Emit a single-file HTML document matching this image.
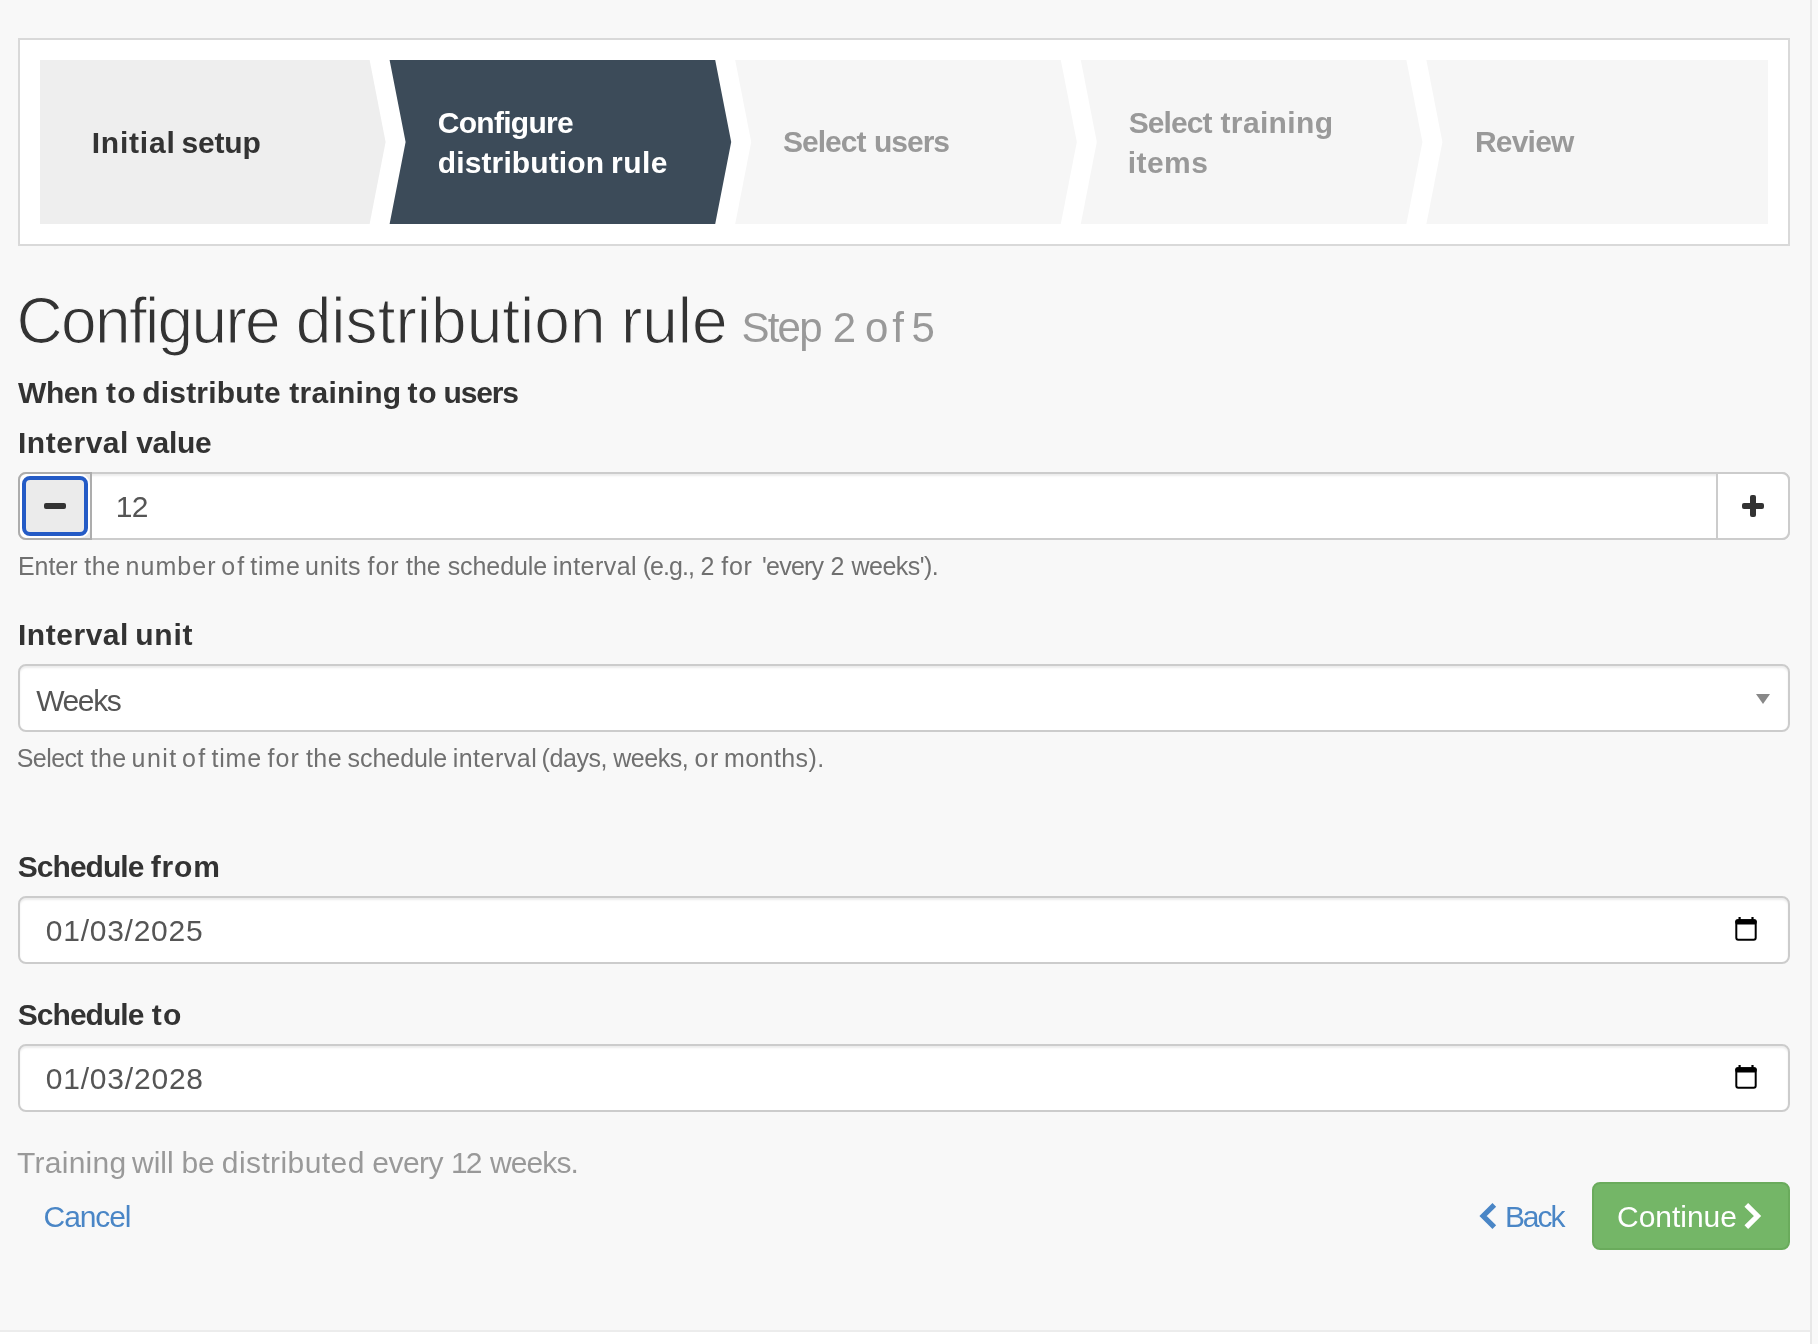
<!DOCTYPE html>
<html><head><meta charset="utf-8"><title>Configure distribution rule</title>
<style>
html,body{margin:0;padding:0}
body{width:1818px;height:1344px;position:relative;overflow:hidden;background:#f8f8f8;font-family:"Liberation Sans",sans-serif}
.t{position:absolute;white-space:nowrap}
</style></head><body>
<div style="position:absolute;left:1810px;top:0;width:2px;height:1344px;background:#e8e8e8"></div>
<div style="position:absolute;left:1812px;top:0;width:6px;height:1344px;background:#f9f9f9"></div>
<div style="position:absolute;left:0;top:1330px;width:1810px;height:2px;background:#ececec"></div>
<div style="position:absolute;left:0;top:1332px;width:1810px;height:12px;background:#fff"></div>
<div style="position:absolute;left:18px;top:38px;width:1772px;height:208px;box-sizing:border-box;border:2px solid #d9d9d9;background:#fff"></div>
<svg style="position:absolute;left:0;top:0" width="1818" height="260" viewBox="0 0 1818 260"><polygon points="40.0,60 369.6,60 385.6,142 369.6,224 40.0,224" fill="#eeeeee"/><polygon points="389.6,60 715.2,60 731.2,142 715.2,224 389.6,224 405.6,142" fill="#3c4b59"/><polygon points="735.2,60 1060.8,60 1076.8,142 1060.8,224 735.2,224 751.2,142" fill="#f6f6f6"/><polygon points="1080.8,60 1406.4,60 1422.4,142 1406.4,224 1080.8,224 1096.8,142" fill="#f6f6f6"/><polygon points="1426.4,60 1768.0,60 1768.0,224 1426.4,224 1442.4,142" fill="#f6f6f6"/></svg>
<div style="position:absolute;left:18px;width:1772px;height:68px;box-sizing:border-box;border:2px solid #cccccc;border-radius:8px;background:#fff;box-shadow:inset 0 2px 2px rgba(0,0,0,.075);top:472px"></div>
<div style="position:absolute;left:18px;top:472px;width:74px;height:68px;box-sizing:border-box;border:2px solid #adadad;border-radius:8px 0 0 8px;background:#fff"></div>
<div style="position:absolute;left:20px;top:474px;width:70px;height:64px;background:#e9e9e9;border-radius:12px 0 0 12px"></div>
<div style="position:absolute;left:22px;top:476px;width:66px;height:60px;box-sizing:border-box;border:4px solid #245bc6;border-radius:8px;background:#ebebeb;box-shadow:0 0 0 2px #fff"></div>
<div style="position:absolute;left:44px;top:503px;width:22px;height:6px;border-radius:2px;background:#333"></div>
<div style="position:absolute;left:1716px;top:472px;width:74px;height:68px;box-sizing:border-box;border:2px solid #cccccc;border-radius:0 8px 8px 0;background:#fff"></div>
<div style="position:absolute;left:1742px;top:503px;width:22px;height:6px;border-radius:2px;background:#333"></div>
<div style="position:absolute;left:1750px;top:495px;width:6px;height:22px;border-radius:2px;background:#333"></div>
<div style="position:absolute;left:18px;width:1772px;height:68px;box-sizing:border-box;border:2px solid #cccccc;border-radius:8px;background:#fff;box-shadow:inset 0 2px 2px rgba(0,0,0,.075);top:664px"></div>
<svg style="position:absolute;left:1750px;top:690px" width="26" height="20"><polygon points="6,4 20,4 13,14" fill="#888"/></svg>
<div style="position:absolute;left:18px;width:1772px;height:68px;box-sizing:border-box;border:2px solid #cccccc;border-radius:8px;background:#fff;box-shadow:inset 0 2px 2px rgba(0,0,0,.075);top:896px"></div>
<svg style="position:absolute;left:1733px;top:914px" width="26" height="30" viewBox="0 0 26 30"><rect x="3.3" y="6.2" width="19.4" height="19.5" rx="2" fill="none" stroke="#000" stroke-width="2"/><rect x="2.3" y="5.2" width="21.4" height="5.3" rx="2" fill="#000"/><rect x="5.5" y="3" width="2.2" height="3" fill="#000"/><rect x="18.4" y="3" width="2.2" height="3" fill="#000"/></svg>
<div style="position:absolute;left:18px;width:1772px;height:68px;box-sizing:border-box;border:2px solid #cccccc;border-radius:8px;background:#fff;box-shadow:inset 0 2px 2px rgba(0,0,0,.075);top:1044px"></div>
<svg style="position:absolute;left:1733px;top:1062px" width="26" height="30" viewBox="0 0 26 30"><rect x="3.3" y="6.2" width="19.4" height="19.5" rx="2" fill="none" stroke="#000" stroke-width="2"/><rect x="2.3" y="5.2" width="21.4" height="5.3" rx="2" fill="#000"/><rect x="5.5" y="3" width="2.2" height="3" fill="#000"/><rect x="18.4" y="3" width="2.2" height="3" fill="#000"/></svg>
<svg style="position:absolute;left:1476px;top:1200px" width="24" height="32" viewBox="0 0 24 32"><polyline points="18.3,4.8 7.1,16 18.3,27.2" fill="none" stroke="#4a86c6" stroke-width="5.2"/></svg>
<div style="position:absolute;left:1592px;top:1182px;width:198px;height:68px;box-sizing:border-box;border:2px solid #6aab5c;border-radius:8px;background:#74b667"></div>
<svg style="position:absolute;left:1740px;top:1200px" width="24" height="32" viewBox="0 0 24 32"><polyline points="6.3,4.8 17.5,16 6.3,27.2" fill="none" stroke="#fff" stroke-width="5.2"/></svg>
<div style="position:absolute;left:0;top:0;width:1818px;height:1344px;will-change:transform">
<div class="t" style="left:91.75px;top:128.10px;font-size:30px;line-height:30px;font-weight:700;color:#333;letter-spacing:0.775px;">Initial</div>
<div class="t" style="left:181.60px;top:128.10px;font-size:30px;line-height:30px;font-weight:700;color:#333;letter-spacing:-0.212px;">setup</div>
<div class="t" style="left:437.80px;top:107.80px;font-size:30px;line-height:30px;font-weight:700;color:#fff;letter-spacing:-0.725px;">Configure</div>
<div class="t" style="left:437.80px;top:147.60px;font-size:30px;line-height:30px;font-weight:700;color:#fff;letter-spacing:0.118px;">distribution</div>
<div class="t" style="left:611.00px;top:147.60px;font-size:30px;line-height:30px;font-weight:700;color:#fff;letter-spacing:0.500px;">rule</div>
<div class="t" style="left:783.00px;top:127.30px;font-size:30px;line-height:30px;font-weight:700;color:#999;letter-spacing:-0.980px;">Select</div>
<div class="t" style="left:873.90px;top:127.30px;font-size:30px;line-height:30px;font-weight:700;color:#999;letter-spacing:-0.975px;">users</div>
<div class="t" style="left:1128.70px;top:107.50px;font-size:30px;line-height:30px;font-weight:700;color:#999;letter-spacing:-0.920px;">Select</div>
<div class="t" style="left:1220.50px;top:107.50px;font-size:30px;line-height:30px;font-weight:700;color:#999;letter-spacing:0.357px;">training</div>
<div class="t" style="left:1127.70px;top:147.60px;font-size:30px;line-height:30px;font-weight:700;color:#999;letter-spacing:0.475px;">items</div>
<div class="t" style="left:1474.90px;top:127.30px;font-size:30px;line-height:30px;font-weight:700;color:#999;letter-spacing:-0.780px;">Review</div>
<div class="t" style="left:16.50px;top:289.02px;font-size:64px;line-height:64px;font-weight:400;color:#333;letter-spacing:-1.663px;-webkit-text-stroke:1.2px #f8f8f8;">Configure</div>
<div class="t" style="left:295.75px;top:289.02px;font-size:64px;line-height:64px;font-weight:400;color:#333;letter-spacing:0.023px;-webkit-text-stroke:1.2px #f8f8f8;">distribution</div>
<div class="t" style="left:621.00px;top:289.02px;font-size:64px;line-height:64px;font-weight:400;color:#333;letter-spacing:-0.083px;-webkit-text-stroke:1.2px #f8f8f8;">rule</div>
<div class="t" style="left:741.50px;top:306.65px;font-size:42px;line-height:42px;font-weight:400;color:#999;letter-spacing:-1.800px;">Step</div>
<div class="t" style="left:832.85px;top:306.65px;font-size:42px;line-height:42px;font-weight:400;color:#999;letter-spacing:0.000px;">2</div>
<div class="t" style="left:865.00px;top:306.65px;font-size:42px;line-height:42px;font-weight:400;color:#999;letter-spacing:3.800px;">of</div>
<div class="t" style="left:911.55px;top:306.65px;font-size:42px;line-height:42px;font-weight:400;color:#999;letter-spacing:0.000px;">5</div>
<div class="t" style="left:18.10px;top:377.71px;font-size:30px;line-height:30px;font-weight:700;color:#333;letter-spacing:-0.433px;">When</div>
<div class="t" style="left:106.10px;top:377.71px;font-size:30px;line-height:30px;font-weight:700;color:#333;letter-spacing:1.100px;">to</div>
<div class="t" style="left:142.30px;top:377.71px;font-size:30px;line-height:30px;font-weight:700;color:#333;letter-spacing:0.178px;">distribute</div>
<div class="t" style="left:289.30px;top:377.71px;font-size:30px;line-height:30px;font-weight:700;color:#333;letter-spacing:0.257px;">training</div>
<div class="t" style="left:407.60px;top:377.71px;font-size:30px;line-height:30px;font-weight:700;color:#333;letter-spacing:0.600px;">to</div>
<div class="t" style="left:443.60px;top:377.71px;font-size:30px;line-height:30px;font-weight:700;color:#333;letter-spacing:-1.150px;">users</div>
<div class="t" style="left:18.00px;top:427.71px;font-size:30px;line-height:30px;font-weight:700;color:#333;letter-spacing:0.529px;">Interval</div>
<div class="t" style="left:136.20px;top:427.71px;font-size:30px;line-height:30px;font-weight:700;color:#333;letter-spacing:-0.300px;">value</div>
<div class="t" style="left:115.70px;top:492.21px;font-size:30px;line-height:30px;font-weight:400;color:#555;letter-spacing:-0.700px;">12</div>
<div class="t" style="left:18.00px;top:553.84px;font-size:25px;line-height:25px;font-weight:400;color:#707070;letter-spacing:-0.050px;">Enter</div>
<div class="t" style="left:84.30px;top:553.84px;font-size:25px;line-height:25px;font-weight:400;color:#707070;letter-spacing:0.550px;">the</div>
<div class="t" style="left:125.60px;top:553.84px;font-size:25px;line-height:25px;font-weight:400;color:#707070;letter-spacing:1.020px;">number</div>
<div class="t" style="left:221.20px;top:553.84px;font-size:25px;line-height:25px;font-weight:400;color:#707070;letter-spacing:2.100px;">of</div>
<div class="t" style="left:250.20px;top:553.84px;font-size:25px;line-height:25px;font-weight:400;color:#707070;letter-spacing:0.800px;">time</div>
<div class="t" style="left:305.10px;top:553.84px;font-size:25px;line-height:25px;font-weight:400;color:#707070;letter-spacing:0.675px;">units</div>
<div class="t" style="left:367.60px;top:553.84px;font-size:25px;line-height:25px;font-weight:400;color:#707070;letter-spacing:0.950px;">for</div>
<div class="t" style="left:406.00px;top:553.84px;font-size:25px;line-height:25px;font-weight:400;color:#707070;letter-spacing:0.000px;">the</div>
<div class="t" style="left:447.70px;top:553.84px;font-size:25px;line-height:25px;font-weight:400;color:#707070;letter-spacing:-0.086px;">schedule</div>
<div class="t" style="left:552.80px;top:553.84px;font-size:25px;line-height:25px;font-weight:400;color:#707070;letter-spacing:0.457px;">interval</div>
<div class="t" style="left:642.70px;top:553.84px;font-size:25px;line-height:25px;font-weight:400;color:#707070;letter-spacing:-0.920px;">(e.g.,</div>
<div class="t" style="left:700.60px;top:553.84px;font-size:25px;line-height:25px;font-weight:400;color:#707070;letter-spacing:0.000px;">2</div>
<div class="t" style="left:721.20px;top:553.84px;font-size:25px;line-height:25px;font-weight:400;color:#707070;letter-spacing:0.750px;">for</div>
<div class="t" style="left:762.00px;top:553.84px;font-size:25px;line-height:25px;font-weight:400;color:#707070;letter-spacing:-0.760px;">'every</div>
<div class="t" style="left:830.45px;top:553.84px;font-size:25px;line-height:25px;font-weight:400;color:#707070;letter-spacing:0.000px;">2</div>
<div class="t" style="left:851.50px;top:553.84px;font-size:25px;line-height:25px;font-weight:400;color:#707070;letter-spacing:-0.514px;">weeks').</div>
<div class="t" style="left:18.00px;top:619.61px;font-size:30px;line-height:30px;font-weight:700;color:#333;letter-spacing:0.529px;">Interval</div>
<div class="t" style="left:135.30px;top:619.61px;font-size:30px;line-height:30px;font-weight:700;color:#333;letter-spacing:0.733px;">unit</div>
<div class="t" style="left:36.20px;top:685.61px;font-size:30px;line-height:30px;font-weight:400;color:#555;letter-spacing:-1.400px;">Weeks</div>
<div class="t" style="left:16.75px;top:745.74px;font-size:25px;line-height:25px;font-weight:400;color:#707070;letter-spacing:-0.550px;">Select</div>
<div class="t" style="left:90.50px;top:745.74px;font-size:25px;line-height:25px;font-weight:400;color:#707070;letter-spacing:0.500px;">the</div>
<div class="t" style="left:131.60px;top:745.74px;font-size:25px;line-height:25px;font-weight:400;color:#707070;letter-spacing:1.467px;">unit</div>
<div class="t" style="left:181.90px;top:745.74px;font-size:25px;line-height:25px;font-weight:400;color:#707070;letter-spacing:2.500px;">of</div>
<div class="t" style="left:211.50px;top:745.74px;font-size:25px;line-height:25px;font-weight:400;color:#707070;letter-spacing:0.800px;">time</div>
<div class="t" style="left:267.40px;top:745.74px;font-size:25px;line-height:25px;font-weight:400;color:#707070;letter-spacing:1.100px;">for</div>
<div class="t" style="left:305.90px;top:745.74px;font-size:25px;line-height:25px;font-weight:400;color:#707070;letter-spacing:0.450px;">the</div>
<div class="t" style="left:347.60px;top:745.74px;font-size:25px;line-height:25px;font-weight:400;color:#707070;letter-spacing:-0.057px;">schedule</div>
<div class="t" style="left:452.70px;top:745.74px;font-size:25px;line-height:25px;font-weight:400;color:#707070;letter-spacing:0.486px;">interval</div>
<div class="t" style="left:541.60px;top:745.74px;font-size:25px;line-height:25px;font-weight:400;color:#707070;letter-spacing:-0.440px;">(days,</div>
<div class="t" style="left:613.30px;top:745.74px;font-size:25px;line-height:25px;font-weight:400;color:#707070;letter-spacing:-0.500px;">weeks,</div>
<div class="t" style="left:694.50px;top:745.74px;font-size:25px;line-height:25px;font-weight:400;color:#707070;letter-spacing:1.500px;">or</div>
<div class="t" style="left:724.10px;top:745.74px;font-size:25px;line-height:25px;font-weight:400;color:#707070;letter-spacing:0.400px;">months).</div>
<div class="t" style="left:17.75px;top:851.81px;font-size:30px;line-height:30px;font-weight:700;color:#333;letter-spacing:-0.964px;">Schedule</div>
<div class="t" style="left:150.70px;top:851.81px;font-size:30px;line-height:30px;font-weight:700;color:#333;letter-spacing:0.833px;">from</div>
<div class="t" style="left:45.80px;top:915.61px;font-size:30px;line-height:30px;font-weight:400;color:#555;letter-spacing:0.744px;">01/03/2025</div>
<div class="t" style="left:17.75px;top:999.61px;font-size:30px;line-height:30px;font-weight:700;color:#333;letter-spacing:-0.964px;">Schedule</div>
<div class="t" style="left:151.70px;top:999.61px;font-size:30px;line-height:30px;font-weight:700;color:#333;letter-spacing:1.300px;">to</div>
<div class="t" style="left:45.80px;top:1063.61px;font-size:30px;line-height:30px;font-weight:400;color:#555;letter-spacing:0.789px;">01/03/2028</div>
<div class="t" style="left:17.10px;top:1147.70px;font-size:30px;line-height:30px;font-weight:400;color:#999;letter-spacing:0.257px;">Training</div>
<div class="t" style="left:132.10px;top:1147.70px;font-size:30px;line-height:30px;font-weight:400;color:#999;letter-spacing:-0.033px;">will</div>
<div class="t" style="left:181.50px;top:1147.70px;font-size:30px;line-height:30px;font-weight:400;color:#999;letter-spacing:-0.300px;">be</div>
<div class="t" style="left:221.80px;top:1147.70px;font-size:30px;line-height:30px;font-weight:400;color:#999;letter-spacing:0.410px;">distributed</div>
<div class="t" style="left:372.30px;top:1147.70px;font-size:30px;line-height:30px;font-weight:400;color:#999;letter-spacing:-0.550px;">every</div>
<div class="t" style="left:451.00px;top:1147.70px;font-size:30px;line-height:30px;font-weight:400;color:#999;letter-spacing:-1.900px;">12</div>
<div class="t" style="left:490.10px;top:1147.70px;font-size:30px;line-height:30px;font-weight:400;color:#999;letter-spacing:-0.920px;">weeks.</div>
<div class="t" style="left:43.60px;top:1201.51px;font-size:30px;line-height:30px;font-weight:400;color:#4a86c6;letter-spacing:-1.120px;">Cancel</div>
<div class="t" style="left:1504.90px;top:1201.51px;font-size:30px;line-height:30px;font-weight:400;color:#4a86c6;letter-spacing:-2.033px;">Back</div>
<div class="t" style="left:1617.00px;top:1201.51px;font-size:30px;line-height:30px;font-weight:400;color:#fff;letter-spacing:-0.021px;">Continue</div>
</div>
</body></html>
